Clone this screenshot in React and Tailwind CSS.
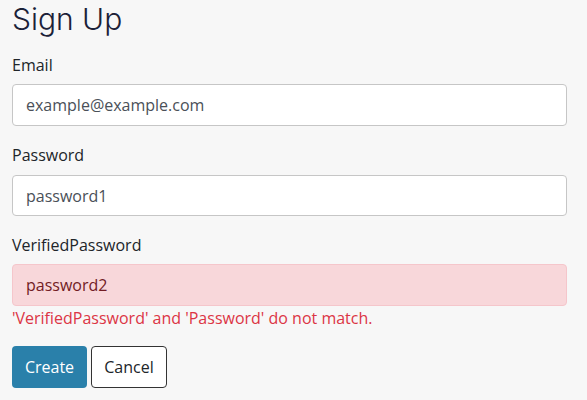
import React from "react";

export default function App() {
  return (
    <div className="min-h-[400px] w-[587px] bg-[#f7f7f7] pl-3 pr-5 text-[16px] text-[#212529]" style={{ fontFamily: '"Open Sans", "Liberation Sans", sans-serif' }}>
      <h1 className="pt-[1px] text-[30px] leading-[36px] font-light text-[#1b2138]" style={{ fontFamily: 'Inter, "Open Sans", sans-serif' }}>
        Sign Up
      </h1>
      <div className="mt-[16px]">
        <label className="block text-[16px] leading-[24px] font-medium text-[#212529]">Email</label>
        <div className="mt-[7px] flex h-[42px] items-center rounded-[4px] border border-[#c6c6c6] bg-white px-[13px] text-[#4a5058]">
          example@example.com
        </div>
      </div>
      <div className="mt-[17px]">
        <label className="block text-[16px] leading-[24px] font-medium text-[#212529]">Password</label>
        <div className="mt-[8px] flex h-[41px] items-center rounded-[4px] border border-[#c6c6c6] bg-white px-[13px] text-[#4a5058]">
          password1
        </div>
      </div>
      <div className="mt-[17px]">
        <label className="block text-[16px] leading-[24px] font-medium text-[#212529]">VerifiedPassword</label>
        <div className="mt-[7px] flex h-[42px] items-center rounded-[4px] border border-[#f5c6cb] bg-[#f8d7da] px-[13px] text-[#721c24]">
          password2
        </div>
        <div className="leading-[24px] text-[#dc3545]">'VerifiedPassword' and 'Password' do not match.</div>
      </div>
      <div className="mt-[16px] flex gap-[4px]">
        <button className="flex h-[42px] w-[75px] items-center justify-center rounded-[4px] bg-[#2a80aa] text-white">Create</button>
        <button className="flex h-[42px] w-[76px] items-center justify-center rounded-[4px] border border-[#333] bg-white text-[#212529]">Cancel</button>
      </div>
    </div>
  );
}
